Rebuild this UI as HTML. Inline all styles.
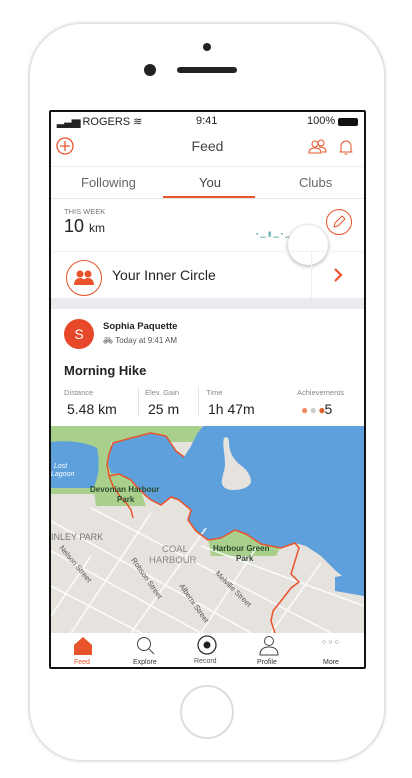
<!DOCTYPE html>
<html><head><meta charset="utf-8"><style>
*{margin:0;padding:0;box-sizing:border-box}
body{width:412px;height:778px;background:#fff;font-family:"Liberation Sans",sans-serif;position:relative;overflow:hidden}
.phone{position:absolute;left:28px;top:22px;width:358px;height:740px;border:2px solid #e3e4e8;border-radius:54px;background:#fff;box-shadow:0 0 4px #eee}
.screen{position:absolute;left:49px;top:110px;width:317px;height:559px;border:2px solid #111;background:#fff;overflow:hidden;border-radius:2px}
.a{position:absolute}
</style></head><body>
<div class="phone"></div>
<div class="a" style="left:203px;top:43px;width:8px;height:8px;border-radius:50%;background:#222"></div>
<div class="a" style="left:144px;top:64px;width:12px;height:12px;border-radius:50%;background:#222"></div>
<div class="a" style="left:177px;top:67px;width:60px;height:6px;border-radius:3px;background:#222"></div>
<div class="a" style="left:180px;top:685px;width:54px;height:54px;border-radius:50%;border:2px solid #ddd"></div>
<div class="screen">
 <div class="a" style="left:6px;top:3px;font-size:11px;color:#222"><b style="letter-spacing:-1px">▂▃▅</b> ROGERS ≋</div>
 <div class="a" style="left:145px;top:3px;font-size:11px;color:#222">9:41</div>
 <div class="a" style="left:256px;top:3px;font-size:11px;color:#222">100%</div>
 <div class="a" style="left:287px;top:6px;width:20px;height:8px;background:#111;border-radius:2px"></div>
 <svg class="a" style="left:5px;top:25px" width="20" height="20"><circle cx="9" cy="9" r="8" fill="none" stroke="#e8532b" stroke-width="1.3"/><path d="M9 4v10M4 9h10" stroke="#e8532b" stroke-width="1.3"/></svg>
 <div class="a" style="left:0;width:313px;top:26px;text-align:center;font-size:14px;color:#444">Feed</div>
 <svg class="a" style="left:257px;top:27px" width="20" height="16"><circle cx="7" cy="5" r="3" fill="none" stroke="#e8532b"/><circle cx="13" cy="4" r="3" fill="none" stroke="#e8532b"/><path d="M1 14c0-4 3-5 6-5s6 1 6 5zM11 8c4 0 7 1 7 5h-4" fill="none" stroke="#e8532b"/></svg>
 <svg class="a" style="left:287px;top:26px" width="16" height="18"><path d="M3 14V8a5 5 0 0 1 10 0v6h1.5H1.5zM6.5 16h3" fill="none" stroke="#e8532b"/></svg>
 <div class="a" style="left:0;right:0;top:54px;border-top:1px solid #eee"></div>
 <div class="a" style="left:30px;top:63px;font-size:13px;color:#666">Following</div>
 <div class="a" style="left:148px;top:63px;font-size:13px;color:#444">You</div>
 <div class="a" style="left:248px;top:63px;font-size:13px;color:#666">Clubs</div>
 <div class="a" style="left:112px;top:84px;width:92px;height:2px;background:#e8532b"></div>
 <div class="a" style="left:0;right:0;top:86px;border-top:1px solid #e6e6e6"></div>
 <div class="a" style="left:13px;top:95px;font-size:7.5px;color:#777">THIS WEEK</div>
 <div class="a" style="left:13px;top:104px;font-size:18px;color:#222">10 <span style="font-size:12px">km</span></div>
 <div class="a" style="left:205px;top:118px;font-size:7px;color:#7bb">▪ ▁ ▮ ▁ ▪ ▁ ▁</div>
 <div class="a" style="left:237px;top:113px;width:40px;height:40px;border-radius:50%;background:#fff;box-shadow:0 1px 4px rgba(0,0,0,.35)"></div>
 <svg class="a" style="left:274px;top:96px" width="28" height="28"><circle cx="14" cy="14" r="12.5" fill="none" stroke="#e8532b"/><path d="M9 19l1-4 7-7 3 3-7 7z" fill="none" stroke="#e8532b"/></svg>
 <div class="a" style="left:0;right:0;top:139px;border-top:1px solid #f2f2f2"></div>
 <svg class="a" style="left:14px;top:147px" width="38" height="38"><circle cx="19" cy="19" r="17.5" fill="#fff" stroke="#e8532b"/><circle cx="15" cy="15" r="3.5" fill="#e8532b"/><circle cx="23" cy="15" r="3.5" fill="#e8532b"/><path d="M9 26c0-5 3-7 6-7s6 2 6 7zM17 26c0-5 3-7 6-7s6 2 6 7z" fill="#e8532b"/></svg>
 <div class="a" style="left:61px;top:155px;font-size:14px;color:#222">Your Inner Circle</div>
 <div class="a" style="left:260px;top:140px;height:46px;border-left:1px solid #eee"></div>
 <svg class="a" style="left:282px;top:156px" width="10" height="14"><path d="M2 1l6 6-6 6" fill="none" stroke="#e8532b" stroke-width="2.2"/></svg>
 <div class="a" style="left:0;right:0;top:186px;height:11px;background:#ebebef"></div>
 <div class="a" style="left:13px;top:207px;width:30px;height:30px;border-radius:50%;background:#e8482a;color:#fff;font-size:14px;text-align:center;line-height:30px">S</div>
 <div class="a" style="left:52px;top:209px;font-size:9.5px;font-weight:bold;color:#222">Sophia Paquette</div>
 <div class="a" style="left:52px;top:224px;font-size:8px;color:#555">🚲︎ Today at 9:41 AM</div>
 <div class="a" style="left:13px;top:251px;font-size:13px;font-weight:bold;color:#222">Morning Hike</div>
 <div class="a" style="left:13px;top:276px;font-size:7.5px;color:#888">Distance</div>
 <div class="a" style="left:16px;top:289px;font-size:14px;color:#222">5.48 km</div>
 <div class="a" style="left:87px;top:275px;height:30px;border-left:1px solid #e4e4e4"></div>
 <div class="a" style="left:94px;top:276px;font-size:7.5px;color:#888">Elev. Gain</div>
 <div class="a" style="left:97px;top:289px;font-size:14px;color:#222">25 m</div>
 <div class="a" style="left:147px;top:275px;height:30px;border-left:1px solid #e4e4e4"></div>
 <div class="a" style="left:155px;top:276px;font-size:7.5px;color:#888">Time</div>
 <div class="a" style="left:157px;top:289px;font-size:14px;color:#222">1h 47m</div>
 <div class="a" style="left:246px;top:276px;font-size:7.5px;color:#888">Achievements</div>
 <div class="a" style="left:250px;top:289px;font-size:12px;letter-spacing:-1px"><span style="color:#f08a60">●</span> <span style="color:#ccc">●</span> <span style="color:#d9632c">●</span><span style="font-size:14px;color:#222;letter-spacing:0">5</span></div>
 <svg class="a" style="left:0;top:314px" width="313" height="207" font-family="Liberation Sans">
  <rect width="313" height="207" fill="#e6e3de"/>
  <path d="M0 0h150v16H0z" fill="#a8d08c"/>
  <path d="M0 8h60v60H0z" fill="#a8d08c"/>
  <path d="M40 45c15-5 40 0 50 20l5 15H45z" fill="#a8d08c"/>
  <path d="M155 100l30-5 45 25-5 10h-65z" fill="#a8d08c"/>
  <path d="M0 16c15-2 35 0 46 6c3 15 2 30-4 40H0z" fill="#5ea0dc"/>
  <path d="M284 151l29-5v24l-29-5z" fill="#5ea0dc"/>
  <path d="M59 27L62 17L80 12L100 7L115 10L125 25L133 31L140 20L146 8L152 0L313 0L313 148L295 153L285 145L270 130L255 120L244 117L230 122L210 118L195 108L184 104L170 112L157 114L145 105L137 94L140 84L128 74L120 71L110 79L100 74L94 69L85 60L80 54L68 48L60 47L57 38Z" fill="#5ea0dc"/>
  <path d="M173 12c3-2 5 0 5 4c0 12 6 18 10 22c8 5 12 12 12 18c-2 6-10 8-18 8c-8 0-12-4-11-10c1-8 3-10 3-16c0-10-3-20-1-26z" fill="#e6e3de"/>
  <g stroke="#fff" stroke-width="1.6" opacity=".85">
   <path d="M0 95l200 112M0 125l150 82M40 82l240 125M150 120l163 60M0 160l90 47"/>
   <path d="M20 207l80-120M80 207l75-105M150 207l55-85M220 207l50-70M0 190l40-60"/>
  </g>
  <path d="M82 92L80 84L76 78L70 72L62 60L58 50L56 38L58 28L62 17L80 12L100 7L115 10L125 25L133 31M58 50L68 48L80 54L85 60L94 69L100 74L110 79L120 71L128 74L140 84L137 94L145 105L157 114L170 112L184 104L195 108L210 118L230 122L244 117L248 122L244 135L240 148L248 156L240 162L230 175L222 185L220 195L224 207" fill="none" stroke="#e8532b" stroke-width="1.5" stroke-linejoin="round"/>
  <text x="3" y="42" font-size="7" fill="#fff" font-style="italic">Lost</text><text x="0" y="50" font-size="7" fill="#fff" font-style="italic">Lagoon</text>
  <text x="39" y="66" font-size="8" font-weight="bold" fill="#2e4a2e">Devonian Harbour</text><text x="66" y="76" font-size="8" font-weight="bold" fill="#2e4a2e">Park</text>
  <text x="162" y="125" font-size="8" font-weight="bold" fill="#2e4a2e">Harbour Green</text><text x="185" y="135" font-size="8" font-weight="bold" fill="#2e4a2e">Park</text>
  <text x="0" y="114" font-size="9" fill="#777">INLEY PARK</text>
  <text x="111" y="126" font-size="9.5" fill="#888">COAL</text><text x="98" y="137" font-size="9.5" fill="#888">HARBOUR</text>
  <text x="8" y="122" font-size="7.5" fill="#555" transform="rotate(50 8 122)">Nelson Street</text>
  <text x="80" y="134" font-size="7.5" fill="#555" transform="rotate(55 80 134)">Robson Street</text>
  <text x="128" y="160" font-size="7.5" fill="#555" transform="rotate(55 128 160)">Alberni Street</text>
  <text x="164" y="148" font-size="7.5" fill="#555" transform="rotate(45 164 148)">Melville Street</text>
 </svg>
 <div class="a" style="left:0;right:0;top:521px;height:38px;background:#fff"></div>
 <svg class="a" style="left:22px;top:524px" width="20" height="20"><path d="M1 9L10 1l9 8v10H1z" fill="#e8532b"/></svg>
 <div class="a" style="left:23px;top:547px;font-size:7px;color:#e8532b">Feed</div>
 <svg class="a" style="left:85px;top:524px" width="20" height="20"><circle cx="8" cy="8" r="6.5" fill="none" stroke="#444"/><path d="M13 13l5 5" stroke="#444"/></svg>
 <div class="a" style="left:82px;top:547px;font-size:7px;color:#333">Explore</div>
 <svg class="a" style="left:146px;top:523px" width="20" height="20"><circle cx="10" cy="10" r="9" fill="none" stroke="#333" stroke-width="1.3"/><circle cx="10" cy="10" r="3.5" fill="#222"/></svg>
 <div class="a" style="left:143px;top:546px;font-size:7px;color:#555">Record</div>
 <svg class="a" style="left:208px;top:523px" width="20" height="22"><circle cx="10" cy="6" r="4.5" fill="none" stroke="#444"/><path d="M1 20c0-6 4-8 9-8s9 2 9 8z" fill="none" stroke="#444"/></svg>
 <div class="a" style="left:206px;top:547px;font-size:7px;color:#333">Profile</div>
 <div class="a" style="left:271px;top:527px;font-size:7px;color:#555;letter-spacing:2px">○○○</div>
 <div class="a" style="left:272px;top:547px;font-size:7px;color:#333">More</div>
</div>
</body></html>
